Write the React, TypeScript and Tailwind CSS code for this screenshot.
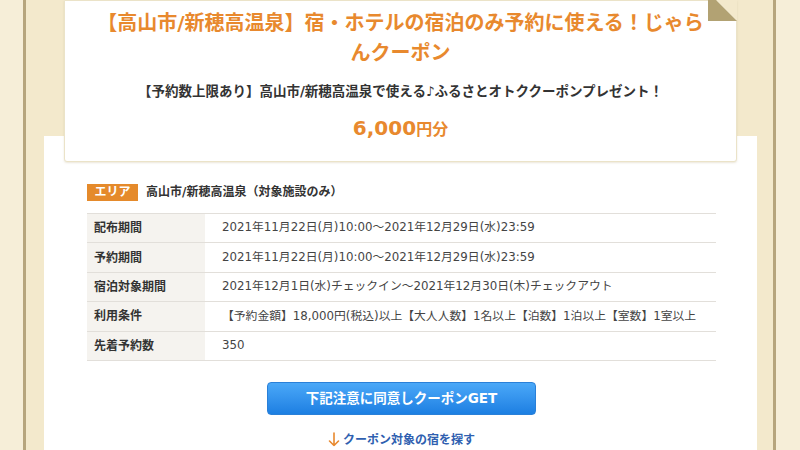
const ROWS = [
  { label: '配布期間', value: '2021年11月22日(月)10:00～2021年12月29日(水)23:59' },
  { label: '予約期間', value: '2021年11月22日(月)10:00～2021年12月29日(水)23:59' },
  { label: '宿泊対象期間', value: '2021年12月1日(水)チェックイン～2021年12月30日(木)チェックアウト' },
  { label: '利用条件', value: '【予約金額】18,000円(税込)以上【大人人数】1名以上【泊数】1泊以上【室数】1室以上' },
  { label: '先着予約数', value: '350' },
]

export default function App() {
  return (
    <div className="flex h-[450px] w-full overflow-hidden bg-[#f6eed8] font-['DejaVu_Sans','Noto_Sans_CJK_JP',sans-serif]">
      <div className="w-[23px] shrink-0" />
      <div className="flex flex-1 border-x-[3px] border-[#b6a57d] bg-[#f3e9cc] pl-[18px] pr-[16px]">
        <div className="flex flex-1 flex-col">
          {/* Coupon card */}
          <div className="relative z-10 mx-[20px] rounded-b-[3px] border border-[#ebe3c8] bg-white px-[26px] pt-[7px] pb-[16px] text-center shadow-[0_1px_2px_rgba(180,160,110,0.25)]">
            <svg className="absolute -right-px -top-[9px]" width="29" height="29" viewBox="0 0 29 29">
              <polygon points="0,0 29,0 29,29" fill="#f3e9cc" />
              <polygon points="0,0 0,29 29,29" fill="#b2a273" />
            </svg>
            <h1 className="text-[20px] font-bold leading-[30px] text-[#e8892e]">
              【高山市/新穂高温泉】宿・ホテルの宿泊のみ予約に使える！じゃらんクーポン
            </h1>
            <p className="mt-[13px] text-[13.5px] font-bold leading-[20px] text-[#333]">
              【予約数上限あり】高山市/新穂高温泉で使える♪ふるさとオトククーポンプレゼント！
            </p>
            <p className="mt-[12px] font-bold leading-[30px] text-[#e8892e]">
              <span className="text-[20px]">6,000</span>
              <span className="text-[16px]">円分</span>
            </p>
          </div>

          {/* Detail panel */}
          <div className="-mt-[26px] flex-1 bg-white pt-[47px] pl-[43px] pr-[41px]">
            <div className="flex h-[18px] items-center gap-[8px]">
              <span className="flex h-[17px] w-[51px] items-center justify-center bg-[#e58a2b] text-[12px] font-bold text-white">
                エリア
              </span>
              <span className="text-[12px] font-bold text-[#333]">高山市/新穂高温泉（対象施設のみ）</span>
            </div>

            <div className="mt-[12px] border-b border-[#e2dfda]">
              {ROWS.map((r) => (
                <div key={r.label} className="flex h-[29.4px] border-t border-[#e2dfda]">
                  <div className="flex w-[118px] shrink-0 items-center bg-[#f5f3ef] pl-[7px] text-[12px] font-bold text-[#333]">
                    {r.label}
                  </div>
                  <div className="flex items-center pl-[17px] text-[11.8px] text-[#444]">{r.value}</div>
                </div>
              ))}
            </div>

            <div className="mt-[21px] flex justify-center">
              <button className="flex h-[33px] w-[269px] items-center justify-center rounded-[4px] border border-[#2a80d8] bg-gradient-to-b from-[#4aa8f8] to-[#1c7fe2] text-[13.5px] font-bold text-white">
                下記注意に同意しクーポンGET
              </button>
            </div>

            <div className="mt-[16px] flex items-center justify-center gap-[3px]">
              <svg width="12" height="15" viewBox="0 0 12 15" fill="none" stroke="#e8892e" strokeWidth="1.6" strokeLinecap="round" strokeLinejoin="round">
                <path d="M6 1v12.5M1.5 9L6 13.5 10.5 9" />
              </svg>
              <span className="text-[12px] font-bold leading-[18px] text-[#2f5fb0]">クーポン対象の宿を探す</span>
            </div>
          </div>
        </div>
      </div>
      <div className="w-[24px] shrink-0" />
    </div>
  )
}
